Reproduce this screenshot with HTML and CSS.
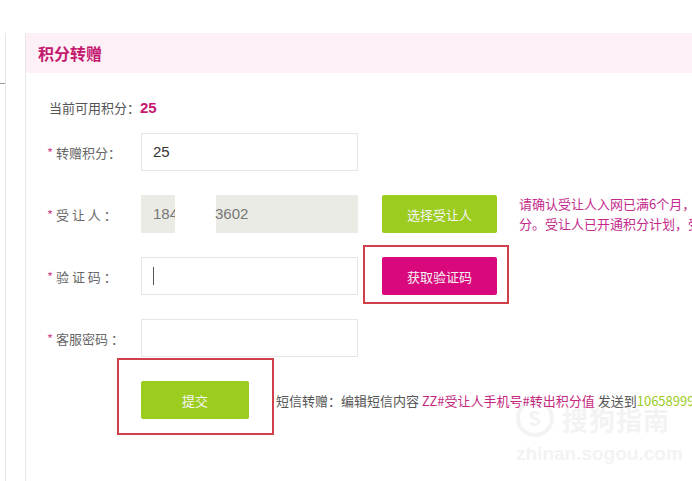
FILE: index.html
```html
<!DOCTYPE html>
<html lang="zh-CN">
<head>
    <meta charset="UTF-8">
    <title>积分转赠</title>
    <link rel="stylesheet" href="styles.css">
</head>
<body>
    <div class="page">
        <div class="sidebar"><span class="side-tick"></span></div>

        <div class="panel">
            <div class="panel-head">积分转赠</div>

            <div class="watermark">
                <div class="wm-top"><span class="wm-logo">S</span>搜狗指南</div>
                <div class="wm-url">zhinan.sogou.com</div>
            </div>

            <div class="panel-body">
                <p class="balance">当前可用积分：<strong>25</strong></p>

                <div class="row">
                    <label class="lbl"><em>*</em> 转赠积分：</label>
                    <div class="field">25</div>
                </div>

                <div class="row">
                    <label class="lbl"><em>*</em> 受 让 人 ：</label>
                    <div class="field gray">184<span class="mask"></span>3602</div>
                    <button class="btn green">选择受让人</button>
                    <p class="hint">请确认受让人入网已满6个月，受让人已开通积分计划，<br>分。受让人已开通积分计划，受让人已开通</p>
                </div>

                <div class="row">
                    <label class="lbl"><em>*</em> 验 证 码 ：</label>
                    <div class="field"><span class="caret"></span></div>
                    <div class="mark-wrap">
                        <button class="btn pink">获取验证码</button>
                        <span class="mark mark-code"></span>
                    </div>
                </div>

                <div class="row">
                    <label class="lbl"><em>*</em> 客服密码 ：</label>
                    <div class="field"></div>
                </div>

                <div class="row submit-row">
                    <div class="mark-wrap">
                        <button class="btn green small">提交</button>
                        <span class="mark mark-submit"></span>
                    </div>
                    <p class="sms">短信转赠：编辑短信内容 <span class="hl">ZZ#受让人手机号#转出积分值</span> 发送到<span class="num">10658999</span></p>
                </div>
            </div>
        </div>
    </div>
</body>
</html>
```

FILE: styles.css
```css
body { margin: 0; background: #fff; font-family: "Noto Sans CJK SC", "Liberation Sans", sans-serif; color: #555; font-size: 13px; }
.page { display: flex; height: 481px; overflow: hidden; }

.sidebar { width: 5px; flex-shrink: 0; margin-top: 33px; border-right: 1px solid #e6e6e6; position: relative; }
.side-tick { position: absolute; left: 0; top: 50px; width: 5px; height: 1px; background: #999; }

.panel { flex: 1; margin: 33px 0 0 19px; border-left: 1px solid #e8e8e8; position: relative; min-width: 0; overflow: hidden; }
.panel-head {
    height: 40px;
    line-height: 40px;
    padding-left: 12px;
    background: #fdf0f6;
    color: #c4186f;
    font-size: 16px;
    font-weight: bold;
}
.panel-body { padding: 24px 0 0 21px; position: relative; }

.balance { margin: 0 0 14px 2px; height: 22px; line-height: 22px; }
.balance strong { color: #c4186f; font-family: "Liberation Sans", sans-serif; font-size: 15px; }

.row { display: flex; align-items: center; height: 38px; margin-bottom: 24px; white-space: nowrap; }
.row > * { flex-shrink: 0; }
.lbl { width: 94px; color: #666; }
.lbl em { color: #d24b92; font-style: normal; }

.field {
    width: 204px;
    height: 36px;
    line-height: 36px;
    padding-left: 11px;
    border: 1px solid #e6e6e6;
    color: #333;
    font-family: "Liberation Sans", sans-serif;
    font-size: 15px;
    display: flex;
    align-items: center;
}
.field.gray { background: #ebebe6; border-color: #ebebe6; color: #777; }
.mask { display: inline-block; width: 41px; height: 38px; background: #fff; margin: 0 -1px 0 -3px; }
.caret { width: 1px; height: 18px; background: #555; }

.btn {
    height: 38px;
    width: 115px;
    border: none;
    border-radius: 2px;
    color: #f4f4f4;
    font-family: "Noto Sans CJK SC", sans-serif;
    font-size: 13px;
    cursor: pointer;
}
.row > .btn, .row > .mark-wrap { margin-left: 24px; }
.btn.green { background: #9bcc1e; }
.btn.pink { background: #d9087c; }
.btn.small { width: 108px; }

.hint { margin: 0 0 0 22px; color: #c42a8c; line-height: 20px; font-size: 13px; }

.mark-wrap { position: relative; display: flex; }
.mark { position: absolute; border: 2px solid #d0404a; }
.mark-code { left: -19px; top: -12px; right: -12px; bottom: -9px; }
.mark-submit { left: -24px; top: -23px; right: -25px; bottom: -16px; }

.submit-row { margin-top: 23px; }
.submit-row .mark-wrap { margin-left: 94px; }
.sms { margin: 0 0 0 27px; color: #555; }
.sms .hl { color: #c4287e; }
.sms .num { color: #9bcc1e; }

.watermark { position: absolute; left: 490px; top: 366px; color: #f3f3f3; font-weight: bold; pointer-events: none; }
.wm-top { display: flex; align-items: center; font-size: 26px; letter-spacing: 1px; }
.wm-logo { width: 30px; height: 30px; border: 4px solid #f3f3f3; border-radius: 50%; text-align: center; line-height: 30px; font-size: 20px; margin-right: 8px; }
.wm-url { font-size: 19px; margin-top: 6px; font-family: "Liberation Sans", sans-serif; }
```
